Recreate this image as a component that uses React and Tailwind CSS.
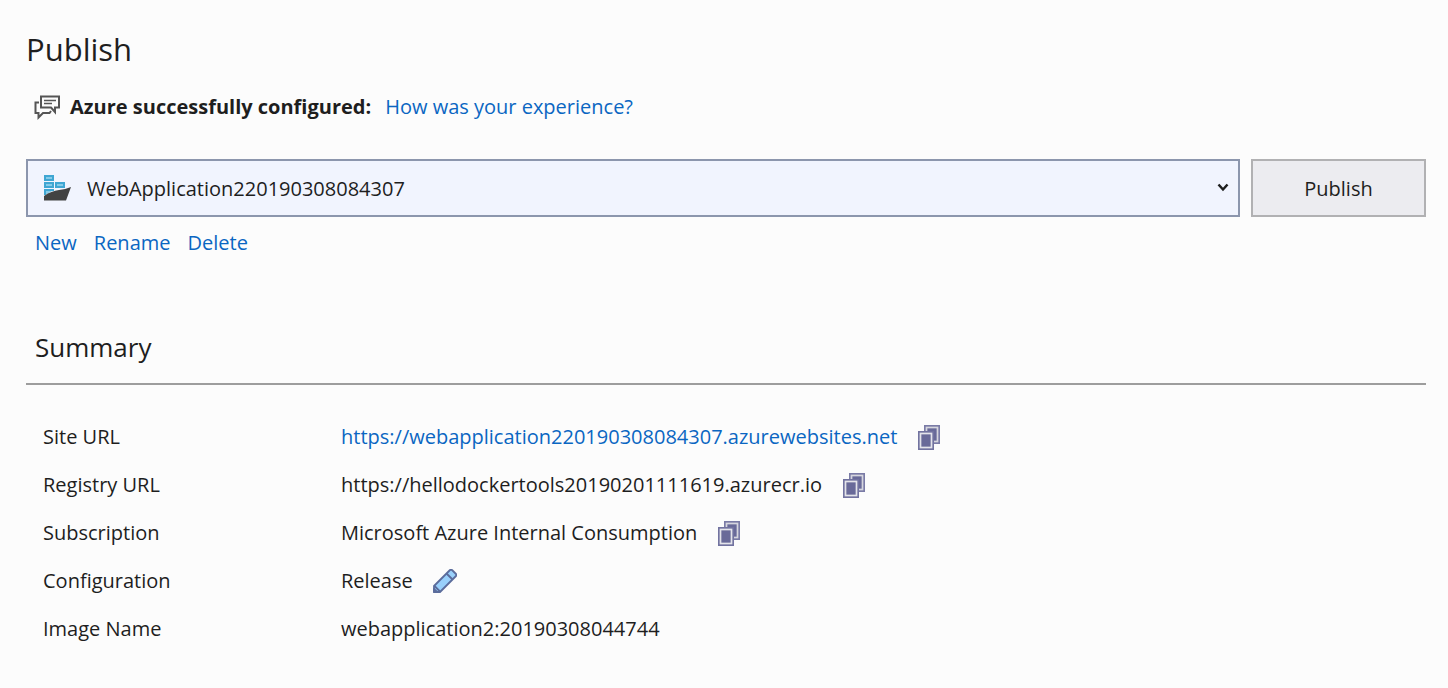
function FeedbackIcon() {
  return (
    <svg className="h-7 w-7" viewBox="0 0 28 28" fill="none" stroke="#555555" strokeWidth="2" aria-hidden="true">
      <path d="M7 3.500H25V14.500H21V19L17 14.500H7Z" />
      <path d="M10 7.500H22M10 10.500H18" strokeWidth="1.500" />
      <path d="M5 9.500H1.500V20H4.500V24.500L9 20H15.500L17 18" />
    </svg>
  );
}

function ContainerIcon() {
  return (
    <svg className="h-7 w-7" viewBox="0 0 28 28" aria-hidden="true">
      <g fill="#86cbe8" stroke="#3fa6d3" strokeWidth="2">
        <rect x="1" y="2" width="8" height="4" />
        <rect x="1" y="9" width="8" height="4" />
        <rect x="12" y="9" width="8" height="4" />
        <path d="M1 21V16H10" />
      </g>
      <path d="M0 22C5 18 10 17 15 16C19.500 15.500 23 14.500 27 13L22 26.500H0Z" fill="#424242" />
    </svg>
  );
}

function CopyIcon() {
  return (
    <svg className="h-[25px] w-6" viewBox="0 0 24 25" aria-hidden="true">
      <rect x="7" y="0" width="16" height="19" fill="#7a7ba6" />
      <rect x="9.500" y="2.500" width="11" height="14" fill="#696a99" stroke="#d6d6de" strokeWidth="1.700" />
      <rect x="1" y="6" width="16" height="19" fill="#7273a0" />
      <rect x="3.500" y="8.500" width="11" height="14" fill="#696a99" stroke="#e4e4ea" strokeWidth="1.700" />
    </svg>
  );
}

function PencilIcon() {
  return (
    <svg className="h-6 w-6" viewBox="0 0 24 24" fill="#99d0fb" stroke="#5b6c9c" strokeWidth="1.800" strokeLinejoin="round" aria-hidden="true">
      <path d="M1 23V17L17 1Q18 0.500 19 1L23 5Q23.500 6 23 7L7 23Z" />
      <path d="M13.500 4.500L19.500 10.500M1.500 17L7 22.500" />
      <path d="M1 23V20L4 23Z" fill="#5b6c9c" />
    </svg>
  );
}

const linkStyle = "text-[#0a66c2] hover:underline";

const details = [
  { label: "Site URL", value: "https://webapplication220190308084307.azurewebsites.net", link: true, action: "copy" },
  { label: "Registry URL", value: "https://hellodockertools20190201111619.azurecr.io", action: "copy" },
  { label: "Subscription", value: "Microsoft Azure Internal Consumption", action: "copy" },
  { label: "Configuration", value: "Release", action: "edit" },
  { label: "Image Name", value: "webapplication2:20190308044744" },
];

function DetailRow({ label, value, link, action }) {
  return (
    <div className="flex min-h-12 items-center">
      <dt className="w-[298px] shrink-0">{label}</dt>
      <dd className="flex items-center gap-5">
        {link ? <a href={value} className={linkStyle}>{value}</a> : <span>{value}</span>}
        {action && (
          <button type="button" aria-label={`${action === "copy" ? "Copy" : "Edit"} ${label}`}>
            {action === "copy" ? <CopyIcon /> : <PencilIcon />}
          </button>
        )}
      </dd>
    </div>
  );
}

export default function App() {
  return (
    <main className="min-h-screen bg-[#fcfcfc] pt-[29px] pr-[22px] pb-8 pl-[26px] font-['Open_Sans','Noto_Sans',sans-serif] text-[20px] leading-7 text-[#1e1e1e]">
      <h1 className="text-[31px] leading-10">Publish</h1>

      <div className="mt-6 flex items-center gap-2 pl-2">
        <FeedbackIcon />
        <strong className="font-bold">Azure successfully configured:</strong>
        <a href="#feedback" className={`ml-1.5 ${linkStyle}`}>How was your experience?</a>
      </div>

      <form className="mt-[38px] flex gap-[11px]" onSubmit={(e) => e.preventDefault()}>
        <div className="grid h-[58px] min-w-0 flex-1 items-center">
          <select
            aria-label="Publish profile"
            className="col-start-1 row-start-1 h-full w-full appearance-none border-2 border-[#8c96ad] bg-[#f1f4fe] pt-0.5 pr-10 pl-[59px]"
          >
            <option>WebApplication220190308084307</option>
          </select>
          <span className="pointer-events-none col-start-1 row-start-1 ml-[18px] justify-self-start">
            <ContainerIcon />
          </span>
          <svg className="pointer-events-none col-start-1 row-start-1 mr-[11px] h-3 w-3 justify-self-end" viewBox="0 0 12 12" fill="none" stroke="#1e1e1e" strokeWidth="2.500" aria-hidden="true">
            <path d="M1.500 2.500L6 7.500L10.500 2.500" />
          </svg>
        </div>
        <button type="submit" className="w-[175px] border-2 border-[#b1b1b3] bg-[#ececf0] pt-0.5">Publish</button>
      </form>

      <nav aria-label="Profile actions" className="mt-3 flex gap-[17px] pl-[9px]">
        <a href="#new" className={linkStyle}>New</a>
        <a href="#rename" className={linkStyle}>Rename</a>
        <a href="#delete" className={linkStyle}>Delete</a>
      </nav>

      <section className="mt-[72px]">
        <h2 className="border-b-2 border-[#9d9d9d] pb-[18px] pl-[9px] text-[26px] leading-9">Summary</h2>
        <dl className="mt-7 pl-[17px]">
          {details.map((row) => (
            <DetailRow key={row.label} {...row} />
          ))}
        </dl>
      </section>
    </main>
  );
}
